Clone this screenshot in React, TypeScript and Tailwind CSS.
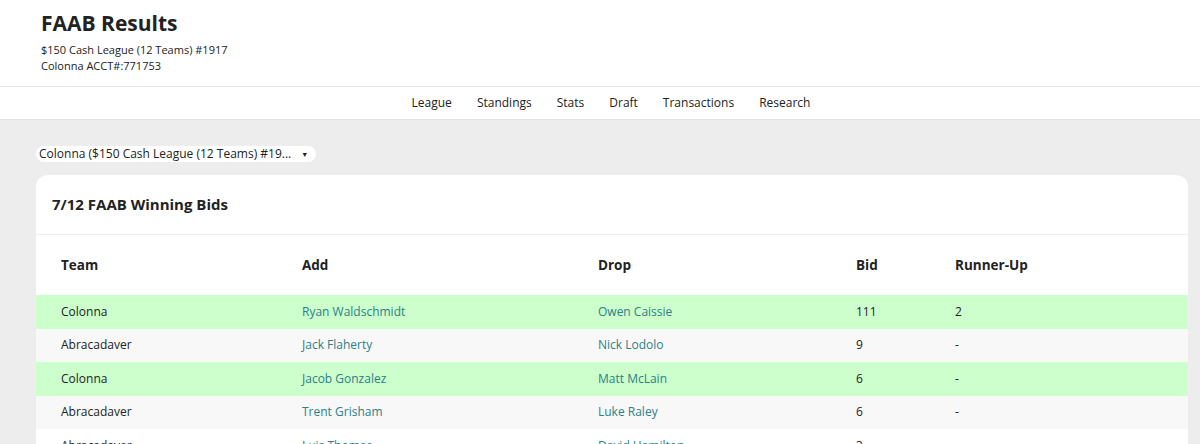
import React from 'react'

const NAV = ['League', 'Standings', 'Stats', 'Draft', 'Transactions', 'Research']

const ROWS = [
  { team: 'Colonna', add: 'Ryan Waldschmidt', drop: 'Owen Caissie', bid: '111', runner: '2', won: true },
  { team: 'Abracadaver', add: 'Jack Flaherty', drop: 'Nick Lodolo', bid: '9', runner: '-', won: false },
  { team: 'Colonna', add: 'Jacob Gonzalez', drop: 'Matt McLain', bid: '6', runner: '-', won: true },
  { team: 'Abracadaver', add: 'Trent Grisham', drop: 'Luke Raley', bid: '6', runner: '-', won: false },
  { team: 'Abracadaver', add: 'Luis Thomas', drop: 'David Hamilton', bid: '3', runner: '-', won: false },
]

export default function App() {
  return (
    <div className="h-[444px] overflow-hidden bg-[#ededed] text-[#222]" style={{ fontFamily: '"Open Sans", Lato, sans-serif' }}>
      {/* Page header */}
      <header className="bg-white px-[41px] pt-[9px] pb-[12px] border-b border-[#e6e6e6]">
        <h1 className="text-[21px] font-bold leading-[28px] text-[#222]">FAAB Results</h1>
        <p className="text-[11px] leading-4 mt-[5px]">$150 Cash League (12 Teams) #1917</p>
        <p className="text-[11px] leading-4">Colonna ACCT#:771753</p>
      </header>

      {/* Nav */}
      <nav className="bg-white h-[33px] flex items-center justify-center gap-[25px] pl-[22px] border-b border-[#e2e2e2]">
        {NAV.map(n => (
          <span key={n} className="text-[12px] text-[#222]">{n}</span>
        ))}
      </nav>

      <main className="pl-[36px] pr-[12px] pt-[26px]">
        <div className="flex w-fit items-center bg-white rounded-full h-[16px] pl-[3px] pr-[8px] text-[12px] leading-none">
          <span>Colonna ($150 Cash League (12 Teams) #19...</span>
          <span className="text-[7px] ml-[10px]">▼</span>
        </div>

        <div className="mt-[13px] w-[1152px] bg-white rounded-t-[12px] overflow-hidden">
          <div className="h-[60px] flex items-center px-[16px] border-b border-[#eeeeee]">
            <h2 className="text-[15px] font-bold text-[#222]">7/12 FAAB Winning Bids</h2>
          </div>
          <table className="w-full text-[12px] border-collapse">
            <thead>
              <tr className="h-[60px] text-left text-[13.5px]">
                <th className="pl-[25px] w-[266px] font-bold">Team</th>
                <th className="w-[296px] font-bold">Add</th>
                <th className="w-[258px] font-bold">Drop</th>
                <th className="w-[99px] font-bold">Bid</th>
                <th className="font-bold">Runner-Up</th>
              </tr>
            </thead>
            <tbody>
              {ROWS.map((r, i) => (
                <tr key={i} className={r.won ? 'h-[33.5px] bg-[#ccffcc]' : i === 4 ? 'h-[33.5px] bg-white' : 'h-[33.5px] bg-[#f8f8f8]'}>
                  <td className="pl-[25px]">{r.team}</td>
                  <td className="text-[#2b8089]">{r.add}</td>
                  <td className="text-[#2b8089]">{r.drop}</td>
                  <td>{r.bid}</td>
                  <td>{r.runner}</td>
                </tr>
              ))}
            </tbody>
          </table>
        </div>
      </main>
    </div>
  )
}
